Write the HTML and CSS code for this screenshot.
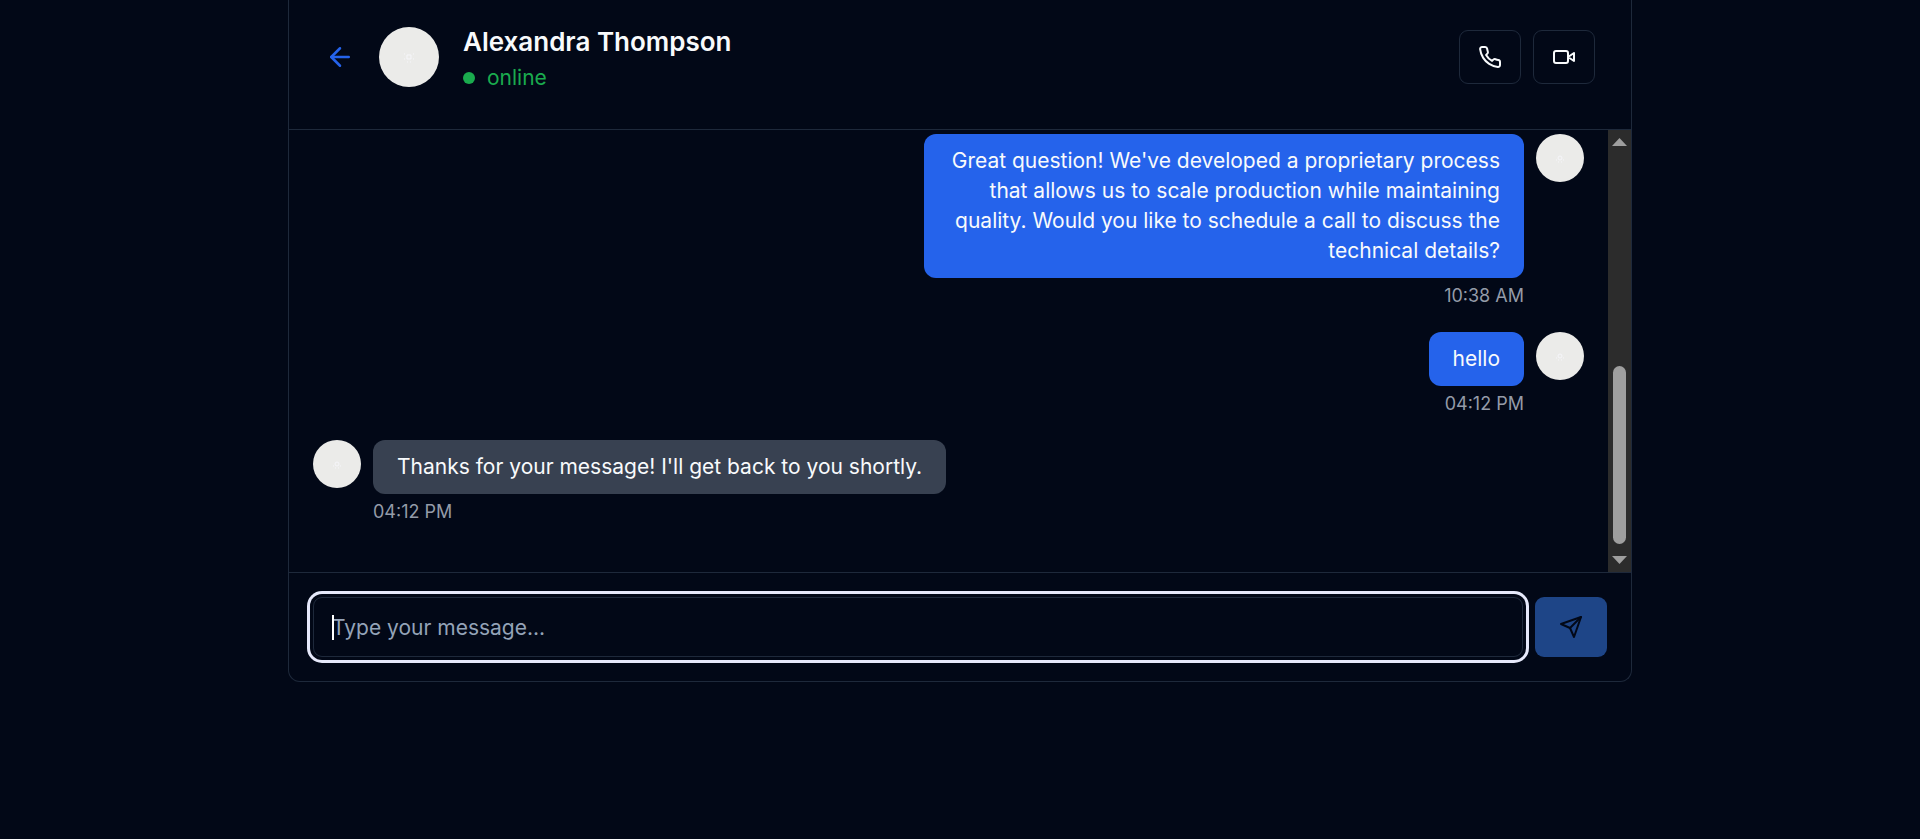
FILE: index.html
```html
<!DOCTYPE html>
<html lang="en">
<head>
<meta charset="utf-8">
<title>Alexandra Thompson</title>
<link rel="stylesheet" href="styles.css">
</head>
<body>
<main class="chat">
  <header class="chat-header">
    <a class="back" href="#" aria-label="Back">
      <svg class="icon-lg" viewBox="0 0 24 24"><path d="m12 19-7-7 7-7"/><path d="M19 12H5"/></svg>
    </a>
    <span class="avatar avatar-lg"><svg viewBox="0 0 12 12"><rect x="4" y="4" width="4" height="4"/><path d="M1 3h1M10 3h1M1 8h1M10 8h1M4 11h1M7 11h1"/></svg></span>
    <div class="person">
      <h1 class="name">Alexandra Thompson</h1>
      <p class="status"><span class="dot"></span>online</p>
    </div>
    <div class="actions">
      <button class="call" type="button" aria-label="Voice call">
        <svg class="icon" viewBox="0 0 24 24"><path d="M22 16.92v3a2 2 0 0 1-2.18 2 19.79 19.79 0 0 1-8.63-3.07 19.5 19.5 0 0 1-6-6 19.79 19.79 0 0 1-3.07-8.67A2 2 0 0 1 4.11 2h3a2 2 0 0 1 2 1.72 12.84 12.84 0 0 0 .7 2.81 2 2 0 0 1-.45 2.11L8.09 9.91a16 16 0 0 0 6 6l1.27-1.27a2 2 0 0 1 2.11-.45 12.84 12.84 0 0 0 2.81.7A2 2 0 0 1 22 16.92z"/></svg>
      </button>
      <button class="call" type="button" aria-label="Video call">
        <svg class="icon" viewBox="0 0 24 24"><path d="m22 8-6 4 6 4V8Z"/><rect width="14" height="12" x="2" y="6" rx="2" ry="2"/></svg>
      </button>
    </div>
  </header>

  <section class="history">
    <div class="messages">
      <article class="message mine">
        <span class="avatar"><svg viewBox="0 0 12 12"><circle cx="6" cy="6" r="2"/><path d="M2 8h1M9 8h1M4 10h1M7 10h1"/></svg></span>
        <div class="body">
          <p class="bubble">Great question! We've developed a proprietary process that allows us to scale production while maintaining quality. Would you like to schedule a call to discuss the technical details?</p>
          <time class="time">10:38 AM</time>
        </div>
      </article>
      <article class="message mine">
        <span class="avatar"><svg viewBox="0 0 12 12"><circle cx="6" cy="6" r="2"/><path d="M2 8h1M9 8h1M4 10h1M7 10h1"/></svg></span>
        <div class="body">
          <p class="bubble">hello</p>
          <time class="time">04:12 PM</time>
        </div>
      </article>
      <article class="message">
        <span class="avatar"><svg viewBox="0 0 12 12"><circle cx="6" cy="6" r="2"/><path d="M2 8h1M9 8h1M4 10h1M7 10h1"/></svg></span>
        <div class="body">
          <p class="bubble">Thanks for your message! I'll get back to you shortly.</p>
          <time class="time">04:12 PM</time>
        </div>
      </article>
    </div>
    <div class="scrollbar" aria-hidden="true">
      <svg class="scroll-arrow" viewBox="0 0 15 8"><path d="M7.5 0 15 8H0Z"/></svg>
      <div class="track"><div class="thumb"></div></div>
      <svg class="scroll-arrow" viewBox="0 0 15 8"><path d="M0 0h15L7.5 8Z"/></svg>
    </div>
  </section>

  <form class="composer">
    <div class="field">
      <input class="input" type="text" aria-label="Message" placeholder="Type your message...">
      <span class="caret"></span>
    </div>
    <button class="send" type="button" aria-label="Send">
      <svg class="icon" viewBox="0 0 24 24"><path d="m22 2-7 20-4-9-9-4Z"/><path d="M22 2 11 13"/></svg>
    </button>
  </form>
</main>
</body>
</html>
```
FILE: styles.css
```css
:root {
  --bg: #020817;
  --line: #1e293b;
  --text: #f8fafc;
  --blue: #2563eb;
}

* { box-sizing: border-box; }

body {
  margin: 0;
  background: var(--bg);
  color: var(--text);
  font-family: Inter, sans-serif;
  font-size: 21px;
  line-height: 30px;
}

h1, p { margin: 0; }

svg {
  display: block;
  fill: none;
  stroke: currentColor;
  stroke-width: 2;
  stroke-linecap: round;
  stroke-linejoin: round;
}

.icon { width: 24px; height: 24px; }
.icon-lg { width: 30px; height: 30px; }

.chat {
  max-width: 1344px;
  margin: 0 auto;
  border: 1px solid var(--line);
  border-top: 0;
  border-radius: 0 0 12px 12px;
}

.chat-header {
  display: flex;
  align-items: center;
  gap: 24px;
  padding: 21px 36px 36px;
  border-bottom: 1px solid var(--line);
}

.back { color: var(--blue); }

.avatar {
  display: flex;
  flex: none;
  align-items: center;
  justify-content: center;
  width: 48px;
  height: 48px;
  border-radius: 50%;
  background: #ebebe9;
}
.avatar svg {
  width: 12px;
  height: 12px;
  color: #f6f6fa;
  stroke-width: 1;
  stroke-linecap: butt;
}
.avatar-lg { width: 60px; height: 60px; }

.person { flex: 1; }

.name {
  font-size: 26px;
  font-weight: 600;
  line-height: 42px;
}

.status {
  display: flex;
  align-items: center;
  gap: 12px;
  color: #1aab4e;
}
.dot {
  width: 12px;
  height: 12px;
  border-radius: 50%;
  background: currentColor;
}

.actions { display: flex; gap: 12px; }

.call {
  padding: 14px 18px;
  border: 1px solid var(--line);
  border-radius: 9px;
  background: transparent;
  color: var(--text);
}

.history { display: flex; }

.messages {
  display: flex;
  flex: 1;
  flex-direction: column;
  gap: 24px;
  padding: 4px 24px 48px;
}

.message { display: flex; gap: 12px; }
.mine { flex-direction: row-reverse; text-align: right; }

.body {
  display: flex;
  flex-direction: column;
  align-items: flex-start;
  gap: 6px;
  max-width: 600px;
}
.mine .body { align-items: flex-end; }

.bubble {
  padding: 12px 24px;
  border-radius: 12px;
  background: #384151;
}
.mine .bubble { background: var(--blue); }

.time {
  color: #949ba8;
  font-size: 18px;
  line-height: 24px;
}

.scrollbar {
  display: flex;
  flex-direction: column;
  align-items: center;
  gap: 12px;
  width: 23px;
  padding: 8px 0;
  background: #2c2c2c;
}
.scroll-arrow { width: 15px; height: 8px; color: #9f9f9f; fill: currentColor; stroke: none; }
.track { display: flex; flex: 1; align-items: flex-end; }
.thumb {
  width: 13px;
  height: 46%;
  border-radius: 7px;
  background: #9f9f9f;
}

.composer {
  display: flex;
  gap: 12px;
  padding: 24px;
  border-top: 1px solid var(--line);
}

.field { position: relative; flex: 1; }

.input {
  display: block;
  width: 100%;
  height: 60px;
  padding: 0 18px;
  border: 1px solid var(--line);
  border-radius: 9px;
  outline: 0;
  background: var(--bg);
  box-shadow: 0 0 0 3px var(--bg), 0 0 0 6px #e6e9fb;
  color: var(--text);
  font: inherit;
}
.input::placeholder { color: #94a3b8; }

.caret {
  position: absolute;
  top: 18px;
  left: 19px;
  width: 2px;
  height: 25px;
  background: #ffffff;
}

.send {
  padding: 18px 24px;
  border: 0;
  border-radius: 9px;
  background: #1e4587;
  color: var(--bg);
}
```
